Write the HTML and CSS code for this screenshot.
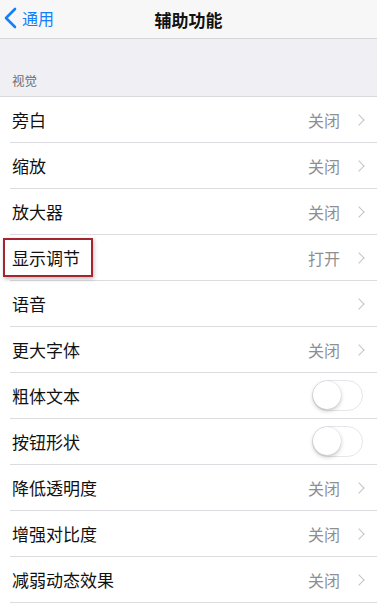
FILE: index.html
```html
<!DOCTYPE html>
<html lang="zh-CN">
<head>
    <meta charset="UTF-8">
    <meta name="viewport" content="width=device-width, initial-scale=1.0">
    <title>辅助功能</title>
    <link rel="stylesheet" href="styles.css">
</head>
<body>
    <div class="navbar">
        <a class="back" href="#">
            <svg width="14" height="22" viewBox="0 0 14 22"><path d="M12 2 L3 11 L12 20" fill="none" stroke="#147efb" stroke-width="2.6" stroke-linecap="round" stroke-linejoin="round"/></svg>
            <span>通用</span>
        </a>
        <h1>辅助功能</h1>
    </div>

    <div class="section-title">视觉</div>

    <ul class="list">
        <li class="row"><span class="label">旁白</span><span class="value">关闭</span><span class="chevron"></span></li>
        <li class="row"><span class="label">缩放</span><span class="value">关闭</span><span class="chevron"></span></li>
        <li class="row"><span class="label">放大器</span><span class="value">关闭</span><span class="chevron"></span></li>
        <li class="row"><span class="label highlight">显示调节</span><span class="value">打开</span><span class="chevron"></span></li>
        <li class="row"><span class="label">语音</span><span class="value"></span><span class="chevron"></span></li>
        <li class="row"><span class="label">更大字体</span><span class="value">关闭</span><span class="chevron"></span></li>
        <li class="row switch-row"><span class="label">粗体文本</span><span class="switch"></span></li>
        <li class="row switch-row"><span class="label">按钮形状</span><span class="switch"></span></li>
        <li class="row"><span class="label">降低透明度</span><span class="value">关闭</span><span class="chevron"></span></li>
        <li class="row"><span class="label">增强对比度</span><span class="value">关闭</span><span class="chevron"></span></li>
        <li class="row"><span class="label">减弱动态效果</span><span class="value">关闭</span><span class="chevron"></span></li>
    </ul>
</body>
</html>
```

FILE: styles.css
```css
* {
    margin: 0;
    padding: 0;
    box-sizing: border-box;
    font-family: "Noto Sans CJK SC", "Noto Sans", sans-serif;
}
body {
    background: #efeff4;
    width: 377px;
    overflow: hidden;
}
.navbar {
    height: 39px;
    background: #f7f7f8;
    border-bottom: 1px solid #d6d6da;
    display: flex;
    align-items: center;
    justify-content: center;
    position: relative;
}
.navbar h1 {
    font-size: 17px;
    font-weight: 700;
    color: #111;
    line-height: 1;
}
.back {
    position: absolute;
    left: 3px;
    top: 7px;
    display: flex;
    align-items: center;
    gap: 5px;
    color: #147efb;
    text-decoration: none;
    font-size: 16px;
    line-height: 22px;
}
.section-title {
    height: 57px;
    padding: 0 12px 6px;
    display: flex;
    align-items: flex-end;
    font-size: 12.5px;
    color: #6d6d72;
}
.list {
    list-style: none;
    background: #fff;
    border-top: 1px solid #d9d9dd;
    padding-bottom: 30px;
}
.row {
    height: 46px;
    margin-left: 10px;
    padding: 0 12px 0 2px;
    border-bottom: 1px solid #dcdce0;
    display: flex;
    align-items: center;
}
.label {
    flex: 1;
    font-size: 17px;
    color: #111;
}
.highlight {
    flex: none;
    margin: 0 auto 0 -9px;
    padding: 5px 11px 5px 7px;
    border: 2px solid #a3262e;
    box-shadow: 1px 2px 4px rgba(0, 0, 0, 0.25);
}
.value {
    font-size: 16px;
    color: #8e8e93;
    margin-right: 15px;
}
.chevron {
    width: 8px;
    height: 8px;
    border-top: 1.5px solid #c4c4c9;
    border-right: 1.5px solid #c4c4c9;
    transform: rotate(45deg);
    margin-right: 2px;
}
.switch-row {
    padding-right: 14px;
}
.switch {
    width: 51px;
    height: 31px;
    border-radius: 16px;
    border: 1.5px solid #e6e6e8;
    background: #fff;
    position: relative;
}
.switch::after {
    content: "";
    position: absolute;
    left: 0;
    top: 0;
    width: 28px;
    height: 28px;
    border-radius: 50%;
    background: #fff;
    box-shadow: 0 2px 4px rgba(0, 0, 0, 0.22), 0 0 1px rgba(0, 0, 0, 0.2);
}
```
